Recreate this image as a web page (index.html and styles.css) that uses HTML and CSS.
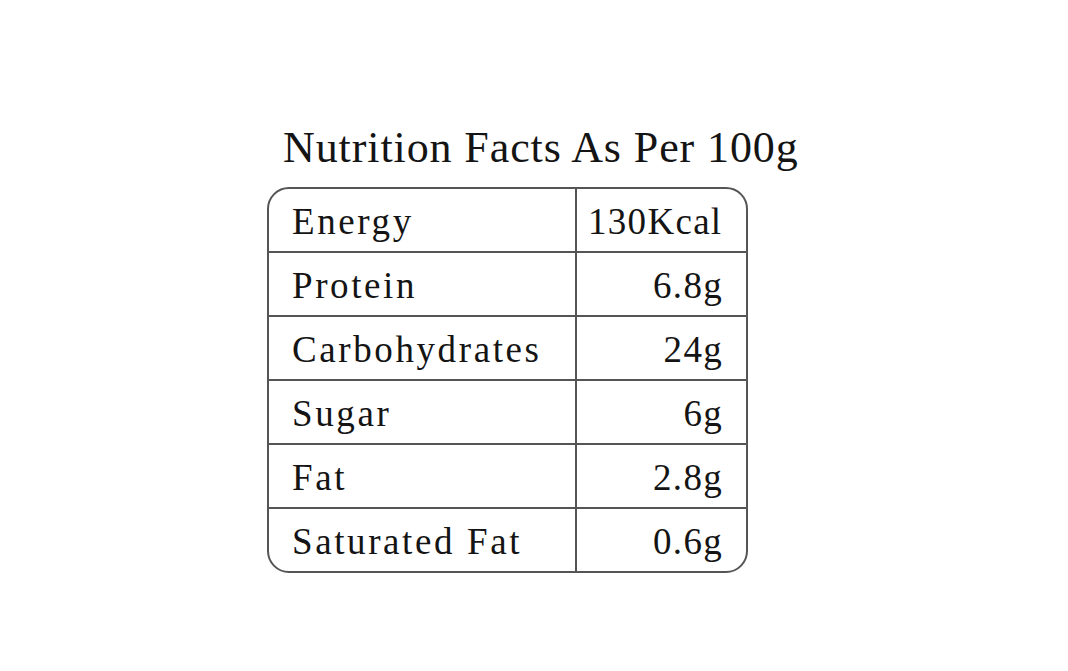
FILE: index.html
```html
<!DOCTYPE html>
<html>
<head>
<meta charset="utf-8">
<link rel="stylesheet" href="styles.css">
</head>
<body>
<div class="page">
  <h1 class="title">Nutrition Facts As Per 100g</h1>
  <div class="facts">
    <div class="cell name">Energy</div><div class="cell value left">130Kcal</div>
    <div class="cell name">Protein</div><div class="cell value">6.8g</div>
    <div class="cell name">Carbohydrates</div><div class="cell value">24g</div>
    <div class="cell name">Sugar</div><div class="cell value">6g</div>
    <div class="cell name">Fat</div><div class="cell value">2.8g</div>
    <div class="cell name last">Saturated Fat</div><div class="cell value last">0.6g</div>
  </div>
</div>
</body>
</html>
```
FILE: styles.css
```css
html, body {
  margin: 0;
  padding: 0;
  background: #fff;
}
body {
  width: 1068px;
  height: 671px;
  overflow: hidden;
  font-family: "Liberation Serif", "Times New Roman", serif;
  color: #141414;
}
.page {
  display: flex;
  flex-direction: column;
  padding-top: 118px;
  padding-left: 267px;
}
.title {
  margin: 0 0 0 16px;
  font-weight: normal;
  font-size: 44px;
  line-height: 60px;
  letter-spacing: 0.9px;
  white-space: nowrap;
}
.facts {
  margin-top: 9px;
  width: 477px;
  border: 2px solid #555;
  border-radius: 22px;
  overflow: hidden;
  display: grid;
  grid-template-columns: 308px 1fr;
}
.cell {
  line-height: 62px;
  font-size: 37px;
  border-bottom: 2px solid #555;
  padding-top: 2px;
  box-sizing: border-box;
  height: 64px;
  white-space: nowrap;
}
.cell.last {
  border-bottom: none;
  height: 62px;
}
.name {
  border-right: 2px solid #555;
  padding-left: 23px;
  letter-spacing: 2.6px;
}
.value {
  text-align: right;
  padding-right: 23px;
  letter-spacing: 1.3px;
}
.value.left {
  text-align: left;
  padding-left: 11px;
  padding-right: 0;
}
```
